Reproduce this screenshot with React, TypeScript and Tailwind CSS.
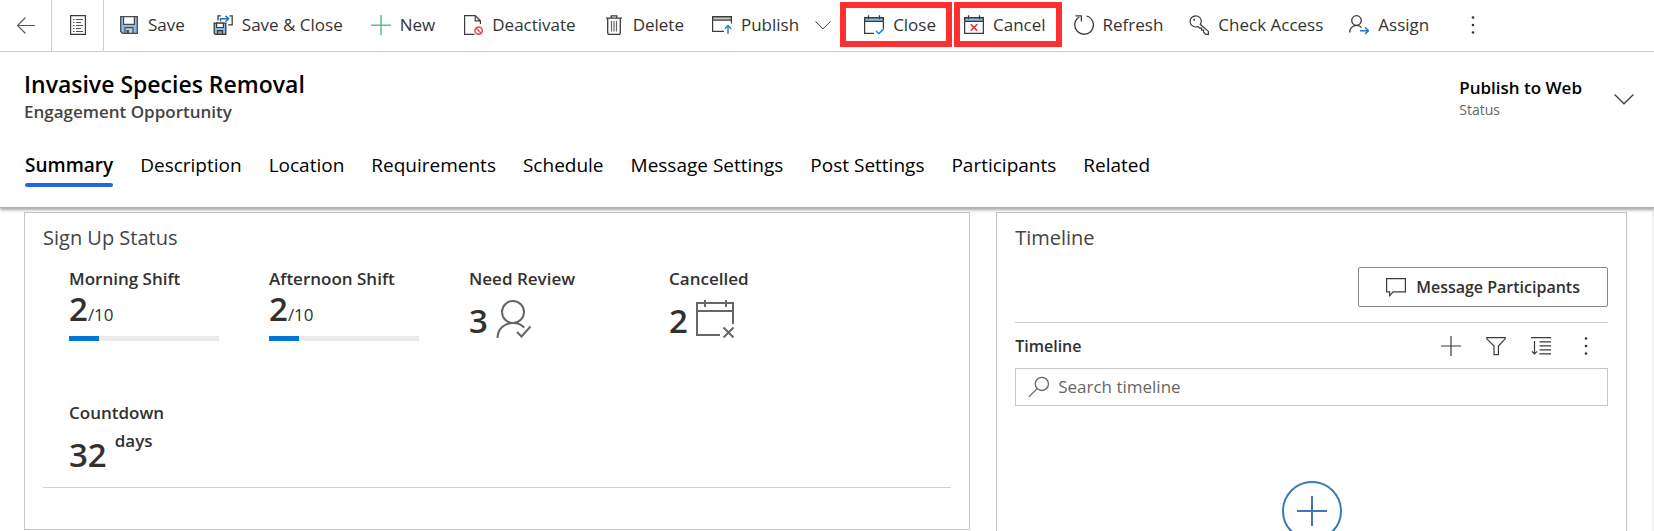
import type { ReactNode } from "react";

const INK = "#3b3b3b";

function Icon({ children, className = "size-5" }: { children: ReactNode; className?: string }) {
  return (
    <svg viewBox="0 0 20 20" fill="none" stroke={INK} strokeWidth="1.2" className={`shrink-0 ${className}`} aria-hidden="true">
      {children}
    </svg>
  );
}

const BackIcon = () => (
  <Icon><path d="M19 10.500H2M9.500 2.500l-8 8 8 8" stroke="#555" strokeWidth="1.1" /></Icon>
);

const FormIcon = () => (
  <Icon>
    <path d="M2.600.6h14.800v18.800H2.600z" />
    <path d="M8 4.500h7M8 7.500h5M8 10.500h7M8 13.500h5M8 16.500h7M5 4.500h1.500M5 7.500h1.500M5 10.500h1.500M5 13.500h1.500M5 16.500h1.500" stroke="#555" strokeWidth="1" />
  </Icon>
);

const SaveIcon = () => (
  <Icon>
    <path d="M1.700 1.700h16.600v16.600H3.500l-1.800-1.800z" fill="#83beec" stroke="#4a4a4a" strokeWidth="1.3" />
    <path d="M4.600 1.700h10.800v7.600H4.600z" fill="#fff" stroke="#4a4a4a" />
    <path d="M6 18.300v-5.600h8v5.600z" fill="#c8c8c8" stroke="#4a4a4a" />
    <path d="M7.500 15h2.400v3.300H7.500z" fill="#4a4a4a" stroke="none" />
  </Icon>
);

const SaveCloseIcon = () => (
  <Icon>
    <path d="M1.200 8.200h11.600v11.200H2.300l-1.100-1.100z" fill="#83beec" stroke="#3b3b3b" strokeWidth="1.3" />
    <path d="M3.600 8.200h6.800v4.300H3.600z" fill="#fff" />
    <path d="M4.500 19.400v-3.800h5v3.800z" fill="#999" />
    <path d="M5 5.500V.8h3M16.500.8h2.700v9h-4" strokeWidth="1.3" />
    <path d="M7.500 6.500V3.800h8M12.600.9l3 2.900-3 2.900" stroke="#1f77c0" strokeWidth="1.5" />
  </Icon>
);

const NewIcon = () => (
  <Icon><path d="M10 0v20M0 10.200h20" stroke="#5fbf87" strokeWidth="1.5" /></Icon>
);

const DeactivateIcon = () => (
  <Icon>
    <path d="M11.500 19.400H1.600V.6h10.600l5.200 5.200V9M12.200.6v5.200h5.200" />
    <circle cx="15.6" cy="15.6" r="3.7" stroke="#e8484d" strokeWidth="1.5" />
    <path d="m13 13 5.200 5.200" stroke="#e8484d" strokeWidth="1.4" />
  </Icon>
);

const DeleteIcon = () => (
  <Icon>
    <path d="M2 3.200h16M7.200 3V.8h5.600V3M3.700 3.400v14.400c0 1 .5 1.600 1.500 1.600h9.600c1 0 1.500-.6 1.500-1.600V3.400" strokeWidth="1.3" />
    <path d="M7.500 6v10.400M10 6v10.400M12.500 6v10.400" stroke="#666" />
  </Icon>
);

const PublishIcon = () => (
  <Icon>
    <path d="M.6 1.600h18.800v3.600H.6z" fill="#c8c8c8" />
    <path d="M12 16.400H.6V1.600h18.800v7" strokeWidth="1.2" />
    <path d="M16 19v-8M12.800 13.800l3.200-3.200 3.200 3.200" stroke="#1f83c9" strokeWidth="1.4" />
  </Icon>
);

const CloseIcon = () => (
  <Icon>
    <path d="M.6 2.600h18.800v3.800H.6z" fill="#83beec" />
    <path d="M10 18.400H.6V2.600h18.800v11M4.500.2v4M15.500.2v4" strokeWidth="1.3" />
    <path d="m12 16 2.800 2.800L20 13.600" stroke="#1f83c9" strokeWidth="1.5" />
  </Icon>
);

const CancelIcon = () => (
  <Icon>
    <path d="M.6 2.600h18.800v3.800H.6z" fill="#83beec" />
    <path d="M.6 2.600h18.800v15.800H.6zM4.500.2v4M15.500.2v4" strokeWidth="1.3" />
    <path d="m6.800 9.300 6.400 6.400M13.200 9.300l-6.400 6.400" stroke="#e8282f" strokeWidth="1.6" />
  </Icon>
);

const RefreshIcon = () => (
  <Icon>
    <path d="M12.600 1A9.300 9.300 0 1 1 5.200 2" strokeWidth="1.3" />
    <path d="M1.500.9h5.900v5.600" strokeWidth="1.3" />
  </Icon>
);

const KeyIcon = () => (
  <Icon>
    <path d="M11.200 9.300c.7-1 1.100-1.900 1.100-3A5.600 5.600 0 1 0 6.700 12c.9 0 1.700-.2 2.300-.5l1.600 1.600h2v2h2v2.200l2.200 2.100h2.600v-3z" strokeWidth="1.2" />
    <circle cx="5.1" cy="4.8" r="1" fill={INK} stroke="none" />
  </Icon>
);

const AssignIcon = () => (
  <Icon>
    <circle cx="7.5" cy="5.5" r="4.8" strokeWidth="1.3" />
    <path d="M.7 17.600c0-4.300 2.900-7.200 6.800-7.200 2.200 0 4 .9 5.100 2.300" strokeWidth="1.3" />
    <path d="M11 15.700h8M16.200 12.500l3.200 3.200-3.200 3.200" stroke="#1f77c0" strokeWidth="1.5" />
  </Icon>
);

const MoreIcon = () => (
  <Icon>
    <g fill="#333" stroke="none">
      <circle cx="10" cy="2.5" r="1.3" /><circle cx="10" cy="10" r="1.3" /><circle cx="10" cy="17.5" r="1.3" />
    </g>
  </Icon>
);

const ChevronIcon = ({ className }: { className?: string }) => (
  <Icon className={className}><path d="m.6 5.500 9.400 9.300 9.400-9.300" strokeWidth="1.2" /></Icon>
);

function Command({ icon, label, marked = "" }: { icon: ReactNode; label: string; marked?: string }) {
  return (
    <button type="button" className={`flex shrink-0 items-center gap-[9px] text-[17px] leading-6 whitespace-nowrap text-[#333] ${marked}`}>
      {icon}
      {label}
    </button>
  );
}

const tabs = ["Summary", "Description", "Location", "Requirements", "Schedule", "Message Settings", "Post Settings", "Participants", "Related"];

function Shift({ name, filled, total }: { name: string; filled: number; total: number }) {
  return (
    <div className="w-50">
      <h3 className="text-[17px] leading-6 font-semibold">{name}</h3>
      <p className="flex items-baseline leading-9">
        <span className="text-[33px] font-semibold">{filled}</span>
        <span className="text-[17px]">/{total}</span>
      </p>
      <div className="mt-[3px] h-[5px] w-[150px] bg-[#edebe9]">
        <div className="h-full bg-[#0078d4]" style={{ width: `${(filled / total) * 100}%` }} />
      </div>
    </div>
  );
}

function Count({ name, value, icon }: { name: string; value: number; icon: ReactNode }) {
  return (
    <div className="w-50">
      <h3 className="text-[17px] leading-6 font-semibold">{name}</h3>
      <div className="mt-[9px] flex items-start gap-2">
        <span className="pt-px text-[33px] leading-10 font-semibold">{value}</span>
        {icon}
      </div>
    </div>
  );
}

export default function App() {
  return (
    <div className="flex h-screen flex-col overflow-hidden bg-white font-['Open_Sans','Noto_Sans',sans-serif] text-[#323130]">
      <div role="toolbar" aria-label="Commands" className="flex h-13 shrink-0 items-center border-b border-[#d2d0ce]">
        <button type="button" aria-label="Back" className="flex h-full w-13 shrink-0 items-center justify-center border-r border-[#d2d0ce] pb-0.5"><BackIcon /></button>
        <button type="button" aria-label="Open record set" className="flex h-full w-13 shrink-0 items-center justify-center border-r border-[#d2d0ce] pb-0.5"><FormIcon /></button>
        <div className="flex items-center gap-[28px] pb-0.5 pl-[15px]">
          <Command icon={<SaveIcon />} label="Save" />
          <Command icon={<SaveCloseIcon />} label="Save & Close" />
          <Command icon={<NewIcon />} label="New" />
          <Command icon={<DeactivateIcon />} label="Deactivate" />
          <Command icon={<DeleteIcon />} label="Delete" />
          <div className="flex items-center gap-4">
            <Command icon={<PublishIcon />} label="Publish" />
            <button type="button" aria-label="More publish options" className="flex"><ChevronIcon className="size-4" /></button>
          </div>
        </div>
        <div className="flex items-center gap-0.5 pr-3 pb-0.5 pl-[9px]">
          <Command icon={<CloseIcon />} label="Close" marked="h-[45px] border-6 border-[#ff2f2f] pr-2.5 pl-[18px]" />
          <Command icon={<CancelIcon />} label="Cancel" marked="h-[45px] border-6 border-[#ff2f2f] pr-2.5 pl-1" />
        </div>
        <div className="flex items-center gap-[26px] pb-0.5">
          <Command icon={<RefreshIcon />} label="Refresh" />
          <Command icon={<KeyIcon />} label="Check Access" />
          <Command icon={<AssignIcon />} label="Assign" />
          <button type="button" aria-label="More commands" className="ml-2 flex"><MoreIcon /></button>
        </div>
      </div>

      <header className="z-10 h-39 shrink-0 border-b border-[#b0b0b0] bg-white pr-5 pl-6 shadow-[0_2px_3px_rgba(0,0,0,0.35)]">
        <div className="flex items-start justify-between pt-[18px]">
          <div>
            <h1 className="text-[23px] leading-7 font-semibold text-black">Invasive Species Removal</h1>
            <p className="pt-0.5 text-[17px] leading-6 font-semibold text-[#444]">Engagement Opportunity</p>
          </div>
          <div className="flex items-center gap-8">
            <div className="pt-1.5">
              <p className="text-[17px] leading-6 font-semibold text-black">Publish to Web</p>
              <p className="text-sm leading-5 text-[#666]">Status</p>
            </div>
            <button type="button" aria-label="Expand header" className="flex pt-2"><ChevronIcon /></button>
          </div>
        </div>
        <nav aria-label="Form sections" className="mt-[27px] flex gap-[27px] pl-px">
          {tabs.map((t, i) => (
            <a key={t} href="#" aria-current={i === 0 ? "page" : undefined} className={i === 0 ? "text-[19px] leading-7 font-semibold text-black" : "text-[19px] leading-7 text-black"}>
              {t}
              {i === 0 && <span className="mt-1 block h-1 rounded-full bg-[#2266e3]" />}
            </a>
          ))}
        </nav>
      </header>

      <main className="grid min-h-0 flex-1 grid-cols-[3fr_2fr] gap-[26px] border-r-2 border-[#f1f1f1] pt-1 pr-[25px] pl-6">
        <section className="mb-px min-w-0 border border-[#c8c6c4] px-[18px] pt-[11px]">
          <h2 className="text-xl leading-7 text-[#444]">Sign Up Status</h2>
          <div className="flex flex-wrap gap-y-15 border-b border-[#d2d0ce] px-[26px] pt-[15px] pb-3">
            <Shift name="Morning Shift" filled={2} total={10} />
            <Shift name="Afternoon Shift" filled={2} total={10} />
            <Count
              name="Need Review"
              value={3}
              icon={
                <svg viewBox="0 0 36 38" fill="none" stroke="#666" strokeWidth="2" className="h-[38px] w-9" aria-hidden="true">
                  <circle cx="17" cy="12" r="11" />
                  <path d="M1.500 38c0-8.700 6.500-15 15.500-15 4.800 0 8.500 1.700 11.300 4.600M21 32l4.500 4.500L34.500 26.500" />
                </svg>
              }
            />
            <Count
              name="Cancelled"
              value={2}
              icon={
                <svg viewBox="0 0 38 38" fill="none" stroke="#666" strokeWidth="2" className="size-[38px]" aria-hidden="true">
                  <path d="M24 35H1V3h36v21M1 11h36M9 0v7M30 0v7M27.500 27.500l10 10M37.500 27.500l-10 10" />
                </svg>
              }
            />
            <div className="w-full">
              <h3 className="text-[17px] leading-6 font-semibold">Countdown</h3>
              <p className="flex items-start gap-2">
                <span className="pt-2.5 text-[33px] leading-10 font-semibold">32</span>
                <span className="pt-1 text-[17px] leading-6 font-semibold">days</span>
              </p>
            </div>
          </div>
        </section>

        <section className="min-w-0 overflow-hidden border border-b-0 border-[#c8c6c4] px-[18px] pt-[11px]">
          <h2 className="text-xl leading-7 text-[#444]">Timeline</h2>
          <div className="flex justify-end border-b border-[#d2d0ce] py-[15px]">
            <button type="button" className="flex h-10 items-center gap-2.5 rounded-xs border border-[#8a8886] px-[27px] text-base font-semibold">
              <Icon><path d="M.6 1.600h18.800v13.200H7.200L3.600 18.600v-3.800H.6z" /></Icon>
              Message Participants
            </button>
          </div>
          <div className="flex h-[45px] items-center justify-between">
            <h3 className="text-base font-semibold">Timeline</h3>
            <div className="flex gap-[25px] pr-3">
              <button type="button" aria-label="Add record" className="flex"><Icon><path d="M10 0v20M0 10h20" /></Icon></button>
              <button type="button" aria-label="Filter" className="flex"><Icon><path d="M.8 1.600h18.400v1.200L12.400 10v8.600H8V10L.8 2.800z" /></Icon></button>
              <button type="button" aria-label="Sort" className="flex"><Icon><path d="M0 1.600h20M8.500 5.800H20M8.500 9.800H20M8.500 13.800H20M8.500 17.800H20M3.500 5v13M.9 15.300l2.600 2.600 2.600-2.600" /></Icon></button>
              <button type="button" aria-label="More timeline actions" className="flex"><MoreIcon /></button>
            </div>
          </div>
          <label className="flex h-[38px] items-center gap-2 border border-[#c8c6c4] px-3">
            <Icon className="size-[22px]"><circle cx="12.6" cy="7.2" r="6" stroke="#666" /><path d="m8.300 11.500-7.500 7.500" stroke="#666" /></Icon>
            <input type="search" aria-label="Search timeline" placeholder="Search timeline" className="min-w-0 flex-1 text-[17px] outline-none placeholder:text-[#666]" />
          </label>
          <div className="mt-[75px] flex justify-center">
            <button type="button" aria-label="Add first record" className="flex">
              <svg viewBox="0 0 60 60" fill="none" stroke="#3a7ab8" strokeWidth="2" className="size-15" aria-hidden="true">
                <circle cx="30" cy="30" r="29" />
                <path d="M30 15v30M15 30h30" />
              </svg>
            </button>
          </div>
        </section>
      </main>
    </div>
  );
}
